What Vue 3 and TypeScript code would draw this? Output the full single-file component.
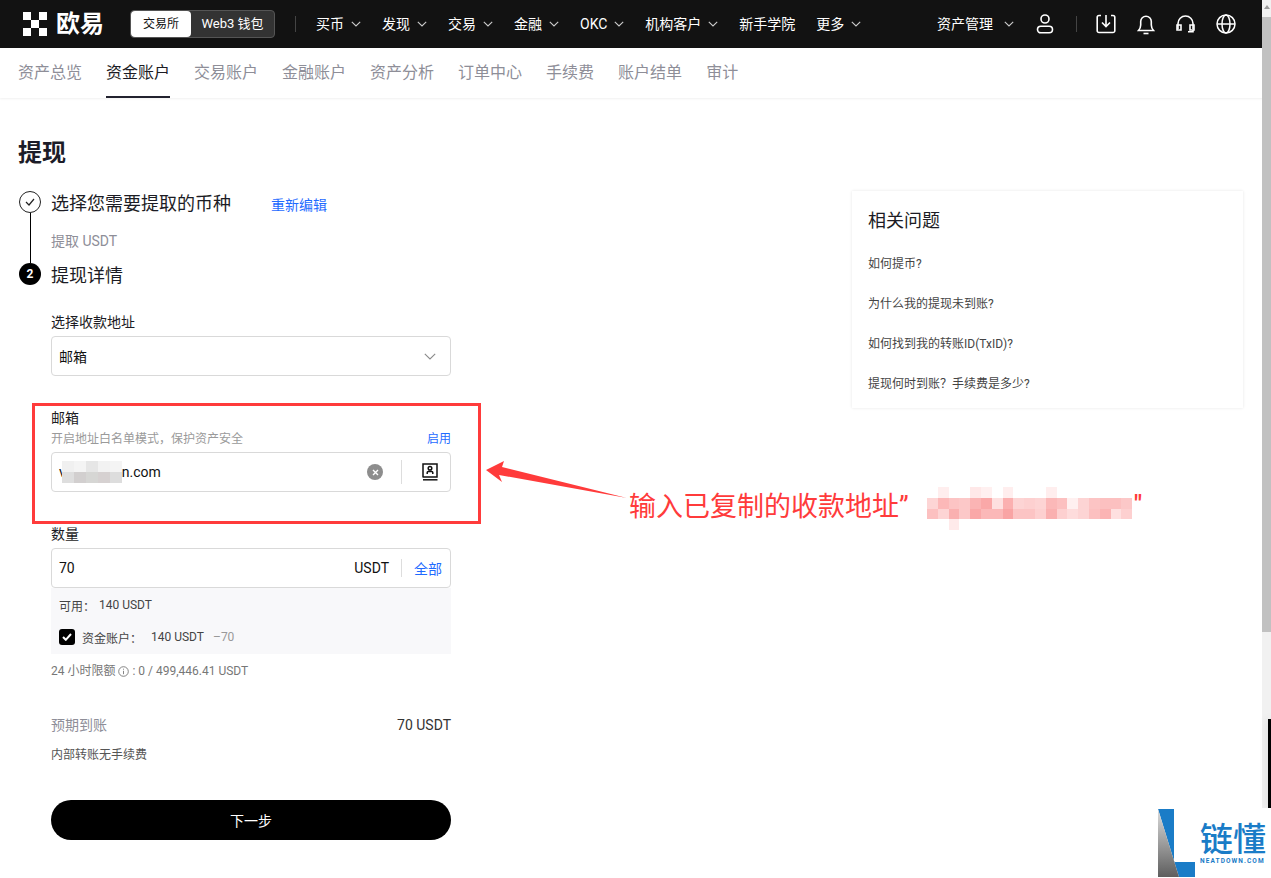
<script setup lang="ts">
const navItems = [
  { label: "买币", arrow: true },
  { label: "发现", arrow: true },
  { label: "交易", arrow: true },
  { label: "金融", arrow: true },
  { label: "OKC", arrow: true },
  { label: "机构客户", arrow: true },
  { label: "新手学院", arrow: false },
  { label: "更多", arrow: true },
];
const tabs = ["资产总览", "资金账户", "交易账户", "金融账户", "资产分析", "订单中心", "手续费", "账户结单", "审计"];
const faqs = ["如何提币?", "为什么我的提现未到账?", "如何找到我的转账ID(TxID)?", "提现何时到账\uFF1F手续费是多少?"];
// pixelated address in the annotation, four rows of 19 cells
const blurCells = [
  "", "#ffeeee", "", "", "#ffe8e8", "#fff0f0", "", "#ffeeee", "", "", "", "#ffeeee", "", "", "", "", "", "", "",
  "#fdd5d5", "#fcb8b8", "#fcc4c4", "#fcc8c8", "#fbb4b4", "#faa8a8", "#fee0e0", "#fbb0b0", "#fdd4d4", "#fdd0d0", "#fdd4d4", "#fbb8b8", "#fcc0c0", "#fff0f0", "#fdd4d4", "#fcc4c4", "#fcc0c0", "#fcc0c0", "#fcc8c8",
  "#fcc0c0", "#fdd4d4", "#fab0b0", "#fcc8c8", "#faa8a8", "#fbb8b8", "#fbb8b8", "#f9a4a4", "#fcc4c4", "#fcc4c4", "#fdd0d0", "#fab0b0", "#fdd0d0", "#fedcdc", "#fdd4d4", "#fcc0c0", "#fbb4b4", "#fee0e0", "#fdd0d0",
  "", "", "#ffeaea", "", "", "", "", "", "", "", "", "", "", "", "", "", "", "", "",
];
const maskCells = ["#f0f0f0", "#f4f4f4", "#e6e6e6", "#f2f2f2", "#f4f4f4", "#dedede", "#d2cfcf", "#d6d6d4", "#d6d1d1", "#dddddd"];
</script>

<template>
  <div class="page">
    <header class="topbar">
      <div class="logo">
        <svg class="logo-mark" width="24" height="24" viewBox="0 0 24 24" fill="#fff">
          <rect x="0" y="0" width="8" height="8" />
          <rect x="16" y="0" width="8" height="8" />
          <rect x="8" y="8" width="8" height="8" />
          <rect x="0" y="16" width="8" height="8" />
          <rect x="16" y="16" width="8" height="8" />
        </svg>
        <span class="logo-text">欧易</span>
      </div>
      <div class="switcher">
        <span class="switch-on">交易所</span>
        <span class="switch-off">Web3 钱包</span>
      </div>
      <i class="bar-sep"></i>
      <nav class="main-nav">
        <span v-for="item in navItems" :key="item.label" class="nav-item">
          {{ item.label }}
          <svg v-if="item.arrow" width="10" height="6" viewBox="0 0 10 6" fill="none" stroke="#ccc" stroke-width="1.1"><path d="M.8.8 5 5 9.2.8" /></svg>
        </span>
      </nav>
      <div class="bar-right">
        <span class="nav-item asset">
          资产管理
          <svg width="10" height="6" viewBox="0 0 10 6" fill="none" stroke="#ccc" stroke-width="1.1"><path d="M.8.8 5 5 9.2.8" /></svg>
        </span>
        <svg class="ic user" width="18" height="20" viewBox="0 0 18 20" fill="none" stroke="#fff" stroke-width="1.6">
          <circle cx="9" cy="5" r="4" />
          <rect x="1.500" y="12.200" width="15" height="6.600" rx="3.300" />
        </svg>
        <i class="bar-sep small"></i>
        <svg class="ic" width="20" height="20" viewBox="0 0 20 20" fill="none" stroke="#fff" stroke-width="1.6">
          <path d="M5 1.500H3A1.800 1.800 0 0 0 1.200 3.300v13.400A1.800 1.800 0 0 0 3 18.500h14a1.800 1.800 0 0 0 1.800-1.800V3.300A1.800 1.800 0 0 0 17 1.500h-2" />
          <path d="M10 1v11M6 8.500l4 4 4-4" />
        </svg>
        <svg class="ic" width="18" height="21" viewBox="0 0 18 21" fill="none" stroke="#fff" stroke-width="1.6">
          <path d="M1.500 16.500h15c-1.400-1.600-2.200-3-2.200-5.500V7.500a5.300 5.300 0 0 0-10.600 0V11c0 2.500-.8 3.900-2.200 5.500Z" />
          <path d="M6.500 19.500h5" />
        </svg>
        <svg class="ic" width="19" height="20" viewBox="0 0 19 20" fill="none" stroke="#fff" stroke-width="1.6">
          <path d="M2 15V9.500a7.500 7.500 0 0 1 15 0V15" />
          <path d="M1 11h4v5H1zM14 11h4v5h-4zM17 16v1.800h-5" />
        </svg>
        <svg class="ic" width="20" height="20" viewBox="0 0 20 20" fill="none" stroke="#fff" stroke-width="1.5">
          <circle cx="10" cy="10" r="9" />
          <ellipse cx="10" cy="10" rx="4" ry="9" />
          <path d="M1 10h18" />
        </svg>
      </div>
    </header>

    <nav class="tabs">
      <span v-for="tab in tabs" :key="tab" class="tab" :class="{ active: tab === '资金账户' }">{{ tab }}</span>
    </nav>

    <main class="content">
      <div class="form-col">
        <h1 class="title">提现</h1>

        <div class="step">
          <div class="step-rail">
            <span class="dot done">
              <svg width="10" height="8" viewBox="0 0 10 8" fill="none" stroke="#222" stroke-width="1.2"><path d="M1 4l3 3 5-6" /></svg>
            </span>
            <i class="rail-line"></i>
          </div>
          <div class="step-body">
            <div class="step-head">
              <span class="step-title">选择您需要提取的币种</span>
              <a class="link edit">重新编辑</a>
            </div>
            <div class="step-note">提取 USDT</div>
          </div>
        </div>

        <div class="step">
          <div class="step-rail"><span class="dot current">2</span></div>
          <div class="step-body">
            <div class="step-title">提现详情</div>

            <div class="form">
              <label class="lbl first">选择收款地址</label>
              <div class="field select">
                <span>邮箱</span>
                <svg width="12" height="7" viewBox="0 0 12 7" fill="none" stroke="#8a8a8a" stroke-width="1.1"><path d="M.8.8 6 6l5.200-5.200" /></svg>
              </div>

              <div class="mail-group">
                <label class="lbl mail-lbl">邮箱</label>
                <div class="hint-row">
                  <span>开启地址白名单模式&#xFF0C;保护资产安全</span>
                  <a class="link">启用</a>
                </div>
                <div class="field address">
                  <span class="addr-text">
                    <span>v</span>
                    <span class="mask">
                      <i v-for="(c, i) in maskCells" :key="i" :style="{ background: c }"></i>
                    </span>
                    <span>n.com</span>
                  </span>
                  <span class="clear">
                    <svg width="7" height="7" viewBox="0 0 7 7" stroke="#fff" stroke-width="1.4"><path d="M1 1l5 5M6 1 1 6" /></svg>
                  </span>
                  <i class="field-sep"></i>
                  <svg class="book" width="16" height="18" viewBox="0 0 16 18" fill="none" stroke="#111" stroke-width="1.500">
                    <path d="M1 14.500V1h14v13H1" />
                    <path d="M1 16.800h14.500" />
                    <circle cx="8" cy="5.200" r="1.800" />
                    <path d="M5.200 11V9.600c0-.7.500-1.200 1.200-1.200h3.200c.7 0 1.200.5 1.200 1.200V11" />
                  </svg>
                </div>
              </div>

              <label class="lbl amount-lbl">数量</label>
              <div class="field amount">
                <span>70</span>
                <span class="unit">USDT</span>
                <i class="field-sep short"></i>
                <a class="link all">全部</a>
              </div>
              <div class="avail">
                <div class="avail-row"><span class="k">可用&#xFF1A;</span><span>140 USDT</span></div>
                <div class="avail-row acct">
                  <span class="check">
                    <svg width="10" height="8" viewBox="0 0 10 8" fill="none" stroke="#fff" stroke-width="2"><path d="M1 4l2.800 2.800L9 1" /></svg>
                  </span>
                  <span class="k">资金账户&#xFF1A;</span><span>140 USDT</span><span class="minus">–70</span>
                </div>
              </div>
              <div class="limit">
                24 小时限额
                <svg width="11" height="11" viewBox="0 0 11 11" fill="none" stroke="#777" stroke-width=".9"><circle cx="5.500" cy="5.500" r="4.800" /><path d="M5.500 4.800v3.400M5.500 2.700v1" /></svg>
                : 0 / 499,446.41 USDT
              </div>
              <div class="arrive">
                <span class="arrive-k">预期到账</span>
                <span class="arrive-v">70 USDT</span>
              </div>
              <div class="fee">内部转账无手续费</div>
              <button class="next" type="button">下一步</button>
            </div>
          </div>
        </div>
      </div>

      <aside class="faq">
        <h2 class="faq-title">相关问题</h2>
        <p v-for="q in faqs" :key="q" class="faq-item">{{ q }}</p>
      </aside>
    </main>

    <!-- annotation layered on top of the screenshot -->
    <div class="mark-box"></div>
    <svg class="mark-arrow" width="145" height="42" viewBox="0 0 145 42">
      <path d="M0 9 18 0l-2 6 125 31L13 14l3 7Z" fill="#ff3b3b" />
    </svg>
    <div class="mark-note">
      <span class="mark-text">输入已复制的收款地址”</span>
      <span class="pixels">
        <i v-for="(c, i) in blurCells" :key="i" :style="{ background: c || 'transparent' }"></i>
      </span>
      <span class="mark-quote">"</span>
    </div>

    <div class="scrollbar">
      <span class="sb-up"></span>
      <span class="sb-thumb"></span>
    </div>
    <div class="dark-sliver"></div>

    <div class="watermark">
      <svg width="37" height="68" viewBox="0 0 37 68">
        <defs>
          <linearGradient id="wmGrey" x1="0" y1="0" x2="0" y2="1">
            <stop offset="0" stop-color="#dcdcdc" />
            <stop offset="1" stop-color="#5e5e5e" />
          </linearGradient>
        </defs>
        <path d="M0 0h16v53h21v15H21Z" fill="#1a7cc7" />
        <path d="M0 0l21 68H0Z" fill="url(#wmGrey)" />
      </svg>
      <div class="wm-text">
        <span class="wm-cn">链懂</span>
        <span class="wm-en">NEATDOWN.COM</span>
      </div>
    </div>
  </div>
</template>

<style scoped>
.page {
  position: relative;
  height: 878px;
  overflow: hidden;
  background: #fff;
  color: #111;
  font-family: Roboto, "Noto Sans CJK SC", sans-serif;
}

.topbar {
  display: flex;
  align-items: center;
  height: 48px;
  padding-left: 23px;
  background: #121212;
  color: #fff;
}

.logo {
  display: flex;
  align-items: center;
  gap: 9px;
  width: 107px;
}

.logo-text {
  font-size: 24px;
  font-weight: 700;
  line-height: 1;
}

.switcher {
  display: flex;
  width: 145px;
  height: 28px;
  box-sizing: border-box;
  border: 1px solid #555;
  border-radius: 4px;
  background: #333;
  font-size: 12px;
  line-height: 26px;
}

.switch-on {
  width: 60px;
  border-radius: 4px;
  background: #fff;
  color: #111;
  text-align: center;
}

.switch-off {
  flex: 1;
  font-size: 13px;
  text-align: center;
}

.bar-sep {
  width: 1px;
  height: 16px;
  margin: 0 20px;
  background: #444;
}

.main-nav {
  display: flex;
  gap: 21px;
}

.nav-item {
  display: flex;
  align-items: center;
  gap: 7px;
  font-size: 14px;
  line-height: 20px;
  white-space: nowrap;
}

.bar-right {
  display: flex;
  align-items: center;
  margin-left: auto;
  padding-right: 35px;
}

.asset {
  gap: 11px;
  margin-right: 22px;
}

.bar-sep.small {
  margin: 0 19px 0 22px;
}

.ic {
  margin-right: 21px;
}

.ic:last-child {
  margin-right: 0;
}

.ic.user {
  margin-right: 0;
}

.tabs {
  display: flex;
  gap: 24px;
  height: 50px;
  padding-left: 18px;
  box-shadow: 0 1px 2px rgba(0, 0, 0, 0.06);
}

.tab {
  box-sizing: border-box;
  height: 50px;
  color: #8e8e98;
  font-size: 16px;
  line-height: 50px;
}

.tab.active {
  border-bottom: 2px solid #22222f;
  color: #1c1c24;
}

.content {
  display: flex;
  align-items: flex-start;
  justify-content: space-between;
  padding: 0 28px 0 18px;
}

.form-col {
  width: 433px;
}

.title {
  margin: 37px 0 20px;
  color: #1c1c28;
  font-size: 24px;
  font-weight: 700;
  line-height: 36px;
}

.step {
  display: flex;
}

.step-rail {
  display: flex;
  flex-direction: column;
  align-items: center;
  flex-shrink: 0;
  width: 22px;
  margin: 0 10px 0 1px;
}

.dot {
  display: flex;
  align-items: center;
  justify-content: center;
  box-sizing: border-box;
  flex-shrink: 0;
  width: 22px;
  height: 22px;
  border-radius: 50%;
}

.dot.done {
  border: 1px solid #222;
}

.dot.current {
  background: #000;
  color: #fff;
  font-size: 12px;
  font-weight: 700;
}

.rail-line {
  flex: 1;
  width: 1px;
  background: #000;
}

.step-body {
  flex: 1;
}

.step-head {
  display: flex;
  align-items: center;
}

.step-title {
  color: #1c1c24;
  font-size: 18px;
  line-height: 26px;
}

.link {
  color: #1f6bff;
  font-size: 12px;
}

.edit {
  margin-left: 40px;
  font-size: 14px;
}

.step-note {
  height: 46px;
  padding-top: 14px;
  box-sizing: border-box;
  color: #8e8e98;
  font-size: 14px;
  line-height: 20px;
}

.lbl {
  display: block;
  color: #1c1c24;
  font-size: 14px;
  line-height: 18px;
}

.lbl.first {
  margin: 24px 0 5px;
}

.field {
  display: flex;
  align-items: center;
  box-sizing: border-box;
  height: 40px;
  padding: 0 7px;
  border: 1px solid #d9d9d9;
  border-radius: 4px;
  font-size: 14px;
}

.select {
  justify-content: space-between;
  padding-right: 14px;
}

.mail-group {
  margin-top: 33px;
}

.hint-row {
  display: flex;
  align-items: center;
  justify-content: space-between;
  margin: 3px 0 4px;
  color: #9a9a9a;
  font-size: 12px;
  line-height: 18px;
}

.address {
  padding-right: 12px;
}

.addr-text {
  display: flex;
  flex: 1;
  align-items: center;
}

.mask {
  display: grid;
  grid-template-columns: repeat(5, 12px);
  grid-auto-rows: 11px;
  width: 60px;
  margin-left: -4px;
}

.clear {
  display: flex;
  align-items: center;
  justify-content: center;
  width: 16px;
  height: 16px;
  border-radius: 50%;
  background: #8d8d8d;
}

.field-sep {
  width: 1px;
  height: 24px;
  margin: 0 20px 0 18px;
  background: #ddd;
}

.field-sep.short {
  height: 18px;
  margin: 0 12px;
}

.amount-lbl {
  margin-top: 33px;
  margin-bottom: 5px;
}

.amount {
  padding-right: 8px;
}

.unit {
  margin-left: auto;
}

.all {
  font-size: 14px;
}

.avail {
  height: 66px;
  padding: 8px 8px 0;
  box-sizing: border-box;
  background: #f8f8fa;
  color: #444;
  font-size: 12px;
}

.avail-row {
  display: flex;
  align-items: center;
  height: 18px;
}

.k {
  width: 40px;
}

.acct {
  margin-top: 14px;
}

.acct .k {
  width: 69px;
}

.check {
  display: flex;
  align-items: center;
  justify-content: center;
  width: 16px;
  height: 16px;
  margin-right: 7px;
  border-radius: 3px;
  background: #000;
}

.minus {
  margin-left: 9px;
  color: #999;
}

.limit {
  display: flex;
  align-items: center;
  gap: 3px;
  margin-top: 8px;
  color: #777;
  font-size: 12px;
  line-height: 18px;
}

.arrive {
  display: flex;
  align-items: center;
  justify-content: space-between;
  margin-top: 35px;
  font-size: 14px;
  line-height: 20px;
}

.arrive-k {
  color: #8e8e98;
}

.arrive-v {
  color: #333;
}

.fee {
  margin-top: 11px;
  color: #555;
  font-size: 12px;
  line-height: 18px;
}

.next {
  display: block;
  width: 100%;
  height: 40px;
  margin-top: 36px;
  border: 0;
  border-radius: 20px;
  background: #000;
  color: #fff;
  font-family: inherit;
  font-size: 14px;
}

.faq {
  width: 391px;
  height: 217px;
  box-sizing: border-box;
  margin-top: 93px;
  padding: 18px 16px 0;
  box-shadow: 0 0 3px rgba(0, 0, 0, 0.1);
}

.faq-title {
  margin: 0 0 22px;
  color: #1c1c24;
  font-size: 18px;
  font-weight: 400;
  line-height: 24px;
}

.faq-item {
  margin: 0 0 22px;
  color: #444;
  font-size: 12px;
  line-height: 18px;
}

.mark-box {
  position: absolute;
  left: 32px;
  top: 403px;
  width: 449px;
  height: 121px;
  box-sizing: border-box;
  border: 3px solid #ff3b3b;
}

.mark-arrow {
  position: absolute;
  left: 486px;
  top: 461px;
}

.mark-note {
  position: absolute;
  left: 629px;
  top: 489px;
  display: flex;
  align-items: flex-start;
  color: #ff3b3b;
  font-size: 27px;
  line-height: 36px;
  white-space: nowrap;
}

.mark-text {
  width: 298px;
}

.pixels {
  display: grid;
  grid-template-columns: repeat(19, 10.8px);
  grid-auto-rows: 10.8px;
  margin-top: -2px;
}

.mark-quote {
  margin-left: 2px;
  font-size: 24px;
  font-weight: 700;
  line-height: 30px;
}

.scrollbar {
  position: absolute;
  top: 0;
  right: 0;
  bottom: 0;
  width: 9px;
  background: #f1f1f1;
}

.sb-up {
  display: block;
  width: 0;
  height: 0;
  margin: 5px auto 0;
  border: 3px solid transparent;
  border-top: 0;
  border-bottom: 4px solid #9a9a9a;
}

.sb-thumb {
  display: block;
  height: 615px;
  margin-top: 8px;
  background: #c1c1c1;
}

.dark-sliver {
  position: absolute;
  top: 719px;
  right: 0;
  width: 3px;
  height: 90px;
  background: #000;
  box-shadow: 0 0 8px rgba(0, 0, 0, 0.15);
}

.watermark {
  position: absolute;
  top: 808px;
  right: 0;
  display: flex;
  gap: 5px;
  width: 113px;
  height: 70px;
  padding-top: 1px;
  box-sizing: border-box;
  background: #fff;
}

.wm-text {
  display: flex;
  flex-direction: column;
  padding-top: 14px;
}

.wm-cn {
  color: #1a7cc7;
  font-size: 33px;
  font-weight: 500;
  line-height: 34px;
  white-space: nowrap;
}

.wm-en {
  color: #1a7cc7;
  font-size: 6.500px;
  font-weight: 700;
  letter-spacing: 1.100px;
  line-height: 8px;
  white-space: nowrap;
}
</style>
